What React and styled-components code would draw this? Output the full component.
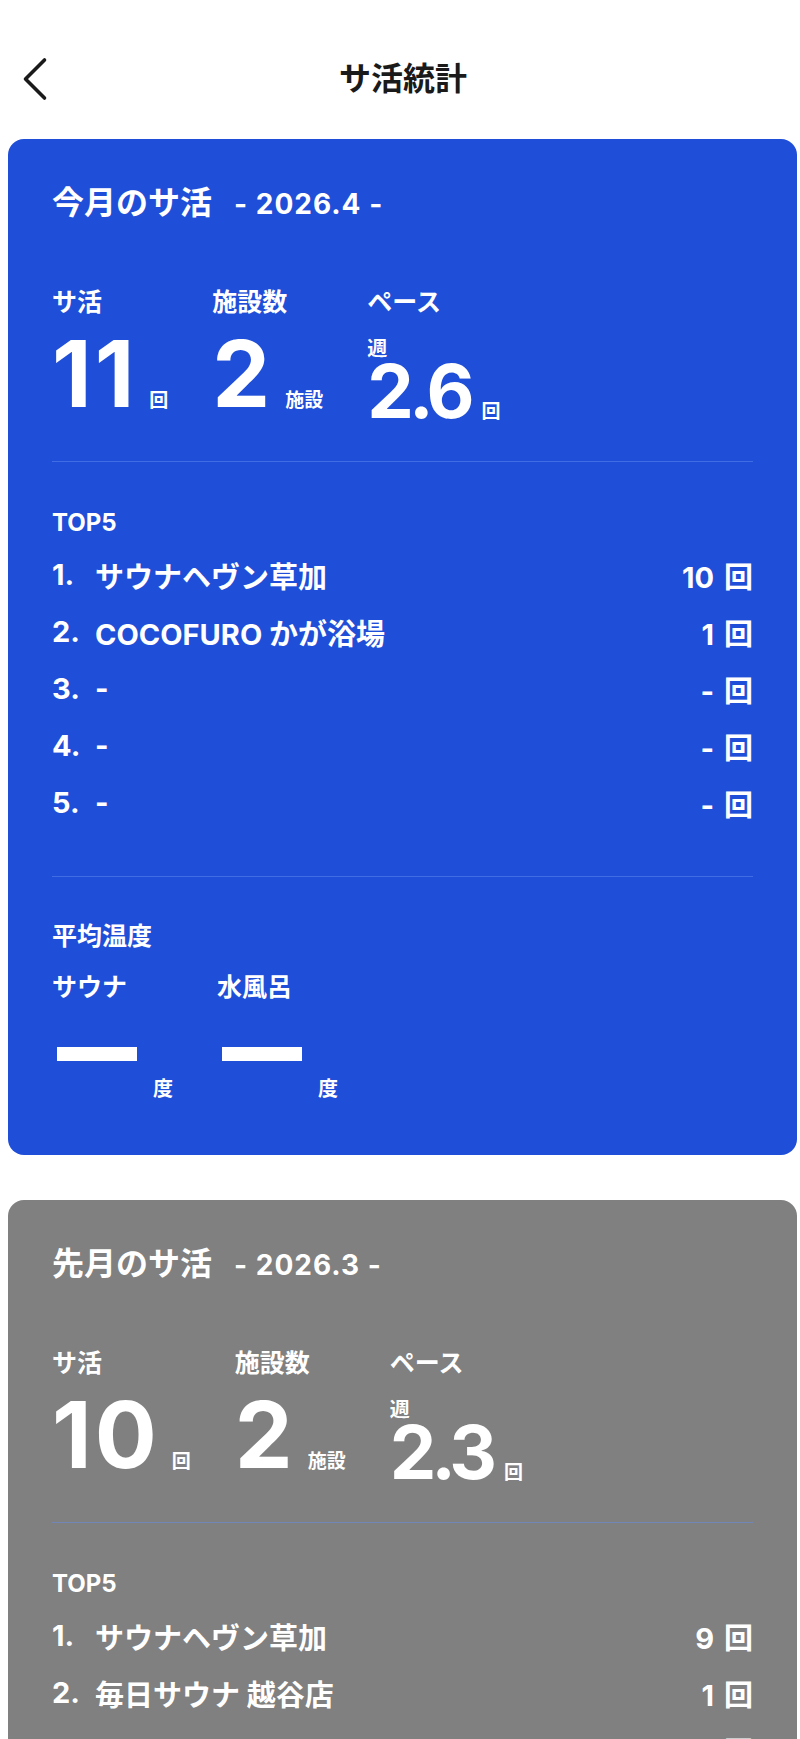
import styled, { createGlobalStyle } from "styled-components"

const GlobalStyle = createGlobalStyle`
    body {
        margin: 0;
        background: #ffffff;
        font-family: "Inter", "Noto Sans CJK JP", sans-serif;
        color: #1a1a1a;
    }
`

const Header = styled.header`
    height: 139px;
    box-sizing: border-box;
    padding: 19px 20px 0;
    display: grid;
    grid-template-columns: 1fr auto 1fr;
    align-items: center;
`

const BackButton = styled.button`
    border: none;
    background: none;
    padding: 0;
    width: 30px;
    height: 44px;
    justify-self: start;
    color: #1a1a1a;
`

const PageTitle = styled.h1`
    margin: 0;
    font-size: 32px;
    line-height: 40px;
    font-weight: 700;
    padding-left: 6px;
`

const Card = styled.section`
    margin: 0 3px 45px 8px;
    background: ${(p) => p.$bg};
    border-radius: 16px;
    padding: 44px 44px 54px;
    color: #ffffff;
`

const CardTitle = styled.h2`
    margin: 0;
    font-size: 32px;
    line-height: 40px;
    font-weight: 700;
`

const Period = styled.span`
    font-size: 28px;
    margin-left: 22px;
    letter-spacing: 1px;
`

const Stats = styled.div`
    display: flex;
    align-items: flex-start;
    gap: 44px;
    margin-top: 62px;
`

const Stat = styled.div`
    display: flex;
    flex-direction: column;
`

const Label = styled.div`
    font-size: 25px;
    line-height: 32px;
    font-weight: 700;
`

const Week = styled.div`
    font-size: 20px;
    line-height: 24px;
    font-weight: 700;
    margin-top: 19px;
`

const ValueRow = styled.div`
    display: flex;
    align-items: baseline;
    margin-top: ${(p) => p.$mt || 0}px;
`

const BigNum = styled.span`
    font-size: ${(p) => p.$size}px;
    line-height: ${(p) => p.$lh}px;
    font-weight: 700;
    letter-spacing: ${(p) => p.$ls}px;
`

const Unit = styled.span`
    font-size: 19px;
    line-height: 24px;
    font-weight: 700;
    margin-left: 12px;
`

const Divider = styled.hr`
    border: none;
    height: 1px;
    margin: ${(p) => p.$mt}px 0 0;
    background: rgba(100, 140, 240, 0.5);
`

const SectionLabel = styled.div`
    font-size: ${(p) => p.$size || 25}px;
    line-height: ${(p) => p.$lh || 32}px;
    font-weight: 700;
    margin-top: ${(p) => p.$mt}px;
`

const RankList = styled.ol`
    list-style: none;
    margin: 8px 0 0;
    padding: 0;
`

const RankRow = styled.li`
    display: flex;
    align-items: center;
    height: 57px;
    font-size: 29px;
    font-weight: 700;
`

const Rank = styled.span`
    min-width: 43px;
`

const Name = styled.span`
    flex: 1;
`

const Count = styled.span`
    margin-left: auto;
`

const CountUnit = styled.span`
    margin-left: 10px;
`

const TempRow = styled.div`
    display: flex;
    gap: 44px;
    margin-top: 19px;
`

const TempValue = styled.div`
    display: flex;
    align-items: flex-end;
    margin-top: 44px;
`

const Dash = styled.span`
    display: block;
    width: 80px;
    height: 14px;
    background: #ffffff;
    margin: 0 16px 40px 5px;
`

const TempUnit = styled.span`
    font-size: 20px;
    line-height: 24px;
    font-weight: 700;
`

const months = [
    {
        title: "今月のサ活",
        period: "2026.4",
        bg: "#1f4ed8",
        count: "11",
        facilities: "2",
        pace: "2.6",
        top: [
            ["サウナヘヴン草加", "10"],
            ["COCOFURO かが浴場", "1"],
            ["-", "-"],
            ["-", "-"],
            ["-", "-"],
        ],
    },
    {
        title: "先月のサ活",
        period: "2026.3",
        bg: "#808080",
        count: "10",
        facilities: "2",
        pace: "2.3",
        top: [
            ["サウナヘヴン草加", "9"],
            ["毎日サウナ 越谷店", "1"],
            ["-", "-"],
            ["-", "-"],
            ["-", "-"],
        ],
    },
]

function MonthCard({ m }) {
    return (
        <Card $bg={m.bg}>
            <CardTitle>
                {m.title}
                <Period>- {m.period} -</Period>
            </CardTitle>

            <Stats>
                <Stat>
                    <Label>サ活</Label>
                    <ValueRow $mt={10}>
                        <BigNum $size={92} $lh={92} $ls={3}>{m.count}</BigNum>
                        <Unit>回</Unit>
                    </ValueRow>
                </Stat>
                <Stat>
                    <Label>施設数</Label>
                    <ValueRow $mt={10}>
                        <BigNum $size={92} $lh={92} $ls={3}>{m.facilities}</BigNum>
                        <Unit>施設</Unit>
                    </ValueRow>
                </Stat>
                <Stat>
                    <Label>ペース</Label>
                    <Week>週</Week>
                    <ValueRow>
                        <BigNum $size={74} $lh={60} $ls={-5}>{m.pace}</BigNum>
                        <Unit>回</Unit>
                    </ValueRow>
                </Stat>
            </Stats>

            <Divider $mt={37} />

            <SectionLabel $mt={46} $size={24} $lh={30}>TOP5</SectionLabel>
            <RankList>
                {m.top.map(([name, n], i) => (
                    <RankRow key={i}>
                        <Rank>{i + 1}.</Rank>
                        <Name>{name}</Name>
                        <Count>
                            {n}
                            <CountUnit>回</CountUnit>
                        </Count>
                    </RankRow>
                ))}
            </RankList>

            <Divider $mt={45} />

            <SectionLabel $mt={43}>平均温度</SectionLabel>
            <TempRow>
                <Stat>
                    <Label>サウナ</Label>
                    <TempValue>
                        <Dash />
                        <TempUnit>度</TempUnit>
                    </TempValue>
                </Stat>
                <Stat>
                    <Label>水風呂</Label>
                    <TempValue>
                        <Dash />
                        <TempUnit>度</TempUnit>
                    </TempValue>
                </Stat>
            </TempRow>
        </Card>
    )
}

export default function App() {
    return (
        <>
            <GlobalStyle />
            <Header>
                <BackButton aria-label="戻る">
                    <svg width="30" height="44" viewBox="0 0 30 44" fill="none">
                        <path d="M24.5 3 L5.5 22 L24.5 41" stroke="currentColor" strokeWidth="3.6" strokeLinecap="round" strokeLinejoin="round" />
                    </svg>
                </BackButton>
                <PageTitle>サ活統計</PageTitle>
                <span />
            </Header>
            {months.map((m) => (
                <MonthCard key={m.period} m={m} />
            ))}
        </>
    )
}
